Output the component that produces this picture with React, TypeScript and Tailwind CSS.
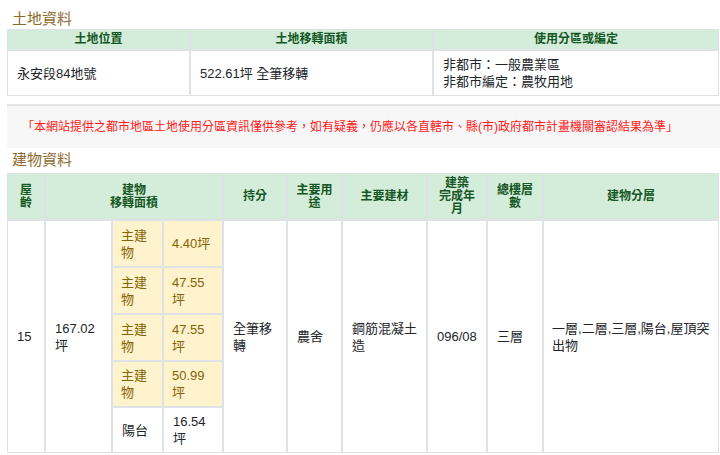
const cell = "border border-[#dee2e6]"
const th = `${cell} bg-[#d4edda] text-[#155724] font-bold text-[12px] leading-[13px] py-[3px] px-1 text-center align-middle`
const td = `${cell} text-[13px] leading-[17px] py-[5px] px-[9px] text-left align-middle text-[#212529]`
const warn = `${cell} bg-[#fff3cd] text-[#856404] text-[13px] leading-[17px] py-[5px] px-[8px] text-left align-middle`

const parts = [
  { label: ["主建", "物"], value: ["4.40坪"], warn: true },
  { label: ["主建", "物"], value: ["47.55", "坪"], warn: true },
  { label: ["主建", "物"], value: ["47.55", "坪"], warn: true },
  { label: ["主建", "物"], value: ["50.99", "坪"], warn: true },
  { label: ["陽台"], value: ["16.54", "坪"], warn: false },
]

const Lines = ({ lines }: { lines: string[] }) => (
  <>
    {lines.map((l, i) => (
      <span key={i}>
        {i > 0 && <br />}
        {l}
      </span>
    ))}
  </>
)

export default function App() {
  return (
    <div className="w-[720px] h-[455px] overflow-hidden bg-white pl-[7px] font-['Liberation_Sans','Noto_Sans_CJK_TC',sans-serif]">
      {/* 土地資料 */}
      <div className="pt-[8px] pl-[5px] text-[15px] leading-[21px] text-[#8d6a2b]">土地資料</div>
      <table className="table-fixed w-[712px] border-separate border-spacing-0">
        <colgroup>
          <col className="w-[183px]" />
          <col className="w-[243px]" />
          <col className="w-[286px]" />
        </colgroup>
        <thead>
          <tr>
            <th className={th}>土地位置</th>
            <th className={th}>土地移轉面積</th>
            <th className={th}>使用分區或編定</th>
          </tr>
        </thead>
        <tbody>
          <tr>
            <td className={td}>永安段84地號</td>
            <td className={td}>522.61坪 全筆移轉</td>
            <td className={td}>
              非都市：一般農業區
              <br />
              非都市編定：農牧用地
            </td>
          </tr>
        </tbody>
      </table>

      {/* notice */}
      <div className="mt-[8px] h-[44px] border-t-2 border-[#e4e4e4] bg-[#f7f7f7] pl-[15px] flex items-center text-[12px] text-[#ff1a1a]">
        「本網站提供之都市地區土地使用分區資訊僅供參考，如有疑義，仍應以各直轄市、縣(市)政府都市計畫機關審認結果為準」
      </div>

      {/* 建物資料 */}
      <div className="pt-[2px] pb-[3px] pl-[5px] text-[15px] leading-[20px] text-[#8d6a2b]">建物資料</div>
      <table className="table-fixed w-[712px] border-separate border-spacing-0">
        <colgroup>
          <col className="w-[38px]" />
          <col className="w-[67px]" />
          <col className="w-[51px]" />
          <col className="w-[60px]" />
          <col className="w-[64px]" />
          <col className="w-[55px]" />
          <col className="w-[85px]" />
          <col className="w-[60px]" />
          <col className="w-[56px]" />
          <col className="w-[176px]" />
        </colgroup>
        <thead>
          <tr>
            <th className={th}>屋<br />齡</th>
            <th className={th} colSpan={3}>建物<br />移轉面積</th>
            <th className={th}>持分</th>
            <th className={th}>主要用<br />途</th>
            <th className={th}>主要建材</th>
            <th className={th}>建築<br />完成年<br />月</th>
            <th className={th}>總樓層<br />數</th>
            <th className={th}>建物分層</th>
          </tr>
        </thead>
        <tbody>
          {parts.map((p, i) => (
            <tr key={i} className={i < 3 ? "h-[47px]" : "h-[46px]"}>
              {i === 0 && (
                <>
                  <td className={td} rowSpan={5}>15</td>
                  <td className={td} rowSpan={5}>167.02<br />坪</td>
                </>
              )}
              <td className={p.warn ? warn : td}><Lines lines={p.label} /></td>
              <td className={p.warn ? warn : td}><Lines lines={p.value} /></td>
              {i === 0 && (
                <>
                  <td className={td} rowSpan={5}>全筆移<br />轉</td>
                  <td className={td} rowSpan={5}>農舍</td>
                  <td className={td} rowSpan={5}>鋼筋混凝土<br />造</td>
                  <td className={td} rowSpan={5}>096/08</td>
                  <td className={td} rowSpan={5}>三層</td>
                  <td className={`${td} whitespace-nowrap !pl-[8px] !pr-0`} rowSpan={5}>一層,二層,三層,陽台,屋頂突<br />出物</td>
                </>
              )}
            </tr>
          ))}
        </tbody>
      </table>
    </div>
  )
}
